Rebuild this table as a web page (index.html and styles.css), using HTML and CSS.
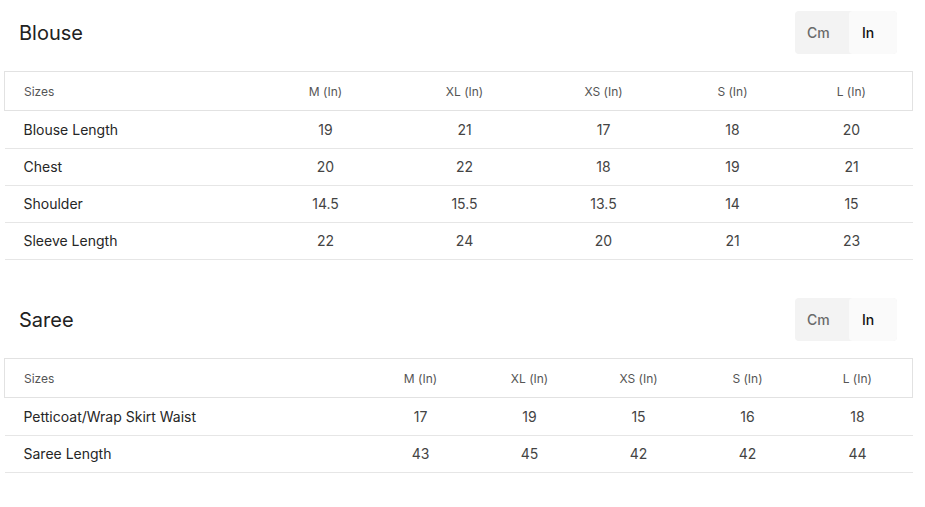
FILE: index.html
```html
<!DOCTYPE html>
<html>
<head>
<meta charset="utf-8">
<link rel="stylesheet" href="styles.css">
</head>
<body>
<div class="page">
  <section class="chart">
    <div class="chart-head">
      <h2 class="chart-title">Blouse</h2>
      <div class="unit-toggle">
        <span class="unit">Cm</span>
        <span class="unit unit-active">In</span>
      </div>
    </div>
    <table class="size-table blouse">
      <colgroup>
        <col class="c0"><col class="c1"><col class="c2"><col class="c3"><col class="c4"><col class="c5">
      </colgroup>
      <thead>
        <tr><th>Sizes</th><th>M (In)</th><th>XL (In)</th><th>XS (In)</th><th>S (In)</th><th>L (In)</th></tr>
      </thead>
      <tbody>
        <tr><td>Blouse Length</td><td>19</td><td>21</td><td>17</td><td>18</td><td>20</td></tr>
        <tr><td>Chest</td><td>20</td><td>22</td><td>18</td><td>19</td><td>21</td></tr>
        <tr><td>Shoulder</td><td>14.5</td><td>15.5</td><td>13.5</td><td>14</td><td>15</td></tr>
        <tr><td>Sleeve Length</td><td>22</td><td>24</td><td>20</td><td>21</td><td>23</td></tr>
      </tbody>
    </table>
  </section>
  <section class="chart">
    <div class="chart-head">
      <h2 class="chart-title">Saree</h2>
      <div class="unit-toggle">
        <span class="unit">Cm</span>
        <span class="unit unit-active">In</span>
      </div>
    </div>
    <table class="size-table saree">
      <colgroup>
        <col class="c0"><col class="c1"><col class="c2"><col class="c3"><col class="c4"><col class="c5">
      </colgroup>
      <thead>
        <tr><th>Sizes</th><th>M (In)</th><th>XL (In)</th><th>XS (In)</th><th>S (In)</th><th>L (In)</th></tr>
      </thead>
      <tbody>
        <tr><td>Petticoat/Wrap Skirt Waist</td><td>17</td><td>19</td><td>15</td><td>16</td><td>18</td></tr>
        <tr><td>Saree Length</td><td>43</td><td>45</td><td>42</td><td>42</td><td>44</td></tr>
      </tbody>
    </table>
  </section>
</div>
</body>
</html>
```

FILE: styles.css
```css
* { box-sizing: border-box; }
html, body { margin: 0; padding: 0; background: #fff; }
body {
  font-family: Inter, "Noto Sans", sans-serif;
  color: #222;
}
.page {
  padding: 11px 13px 0 4px;
}
.chart { margin-bottom: 38px; }
.chart-head {
  display: flex;
  justify-content: space-between;
  align-items: center;
  padding: 0 15px;
  margin-bottom: 17px;
}
.chart-title {
  margin: 0;
  font-size: 20px;
  font-weight: 400;
  color: #222;
}
.unit-toggle {
  display: flex;
  height: 43px;
  border-radius: 4px;
  overflow: hidden;
  background: #f3f3f3;
}
.unit {
  display: flex;
  align-items: center;
  padding-left: 12px;
  font-size: 14px;
  font-weight: 500;
  color: #6a6a6a;
  width: 54px;
}
.unit-active {
  width: 48px;
  padding-left: 13px;
  color: #111;
  background: #fafafa;
  border-radius: 4px;
}
.size-table {
  width: 100%;
  border-collapse: collapse;
  table-layout: fixed;
}
.size-table th {
  height: 39px;
  padding: 0;
  font-size: 12px;
  font-weight: 400;
  color: #555;
  text-align: center;
  border-top: 1px solid #e2e2e2;
  border-bottom: 1px solid #e2e2e2;
}
.size-table th:first-child { border-left: 1px solid #e2e2e2; }
.size-table th:last-child { border-right: 1px solid #e2e2e2; }
.size-table td {
  height: 37px;
  padding: 0 0 1px;
  font-size: 14px;
  color: #444;
  text-align: center;
  border-bottom: 1px solid #e6e6e6;
}
.size-table tbody tr:first-child td { height: 38px; }
.size-table th:first-child,
.size-table td:first-child {
  text-align: left;
  padding-left: 19px;
}
.size-table td:first-child { color: #262626; }
.blouse .c0 { width: 250px; }
.blouse .c1 { width: 142px; }
.blouse .c2 { width: 136px; }
.blouse .c3 { width: 142px; }
.blouse .c4 { width: 116px; }
.blouse .c5 { width: 122px; }
.saree .c0 { width: 362px; }
.saree .c1 { width: 108px; }
.saree .c2 { width: 110px; }
.saree .c3 { width: 108px; }
.saree .c4 { width: 110px; }
.saree .c5 { width: 110px; }
```
